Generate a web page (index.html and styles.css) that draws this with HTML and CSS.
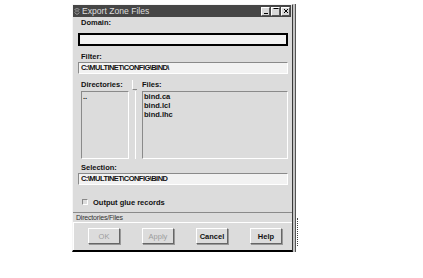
FILE: index.html
```html
<!DOCTYPE html>
<html lang="en">
<head>
    <meta charset="UTF-8">
    <meta name="viewport" content="width=device-width, initial-scale=1.0">
    <title>Export Zone Files</title>
    <link rel="stylesheet" href="styles.css">
</head>
<body>
    <div class="screen">
        <div class="window">
            <div class="titlebar">
                <svg class="ticon" width="6" height="7" viewBox="0 0 6 7">
                    <path d="M0.5 1.5 L3 0.5 L5.5 1.5 M1 3 L5 3 M0.5 4.5 L3 6.5 L5.5 4.5" stroke="#9a9a9a" stroke-width="1" fill="none"/>
                </svg>
                <span class="ttext">Export Zone Files</span>
                <div class="tbtns">
                    <span class="tbtn">
                        <svg width="6" height="6" viewBox="0 0 6 6"><path d="M1 5.5 H5" stroke="#000"/></svg>
                    </span>
                    <span class="tbtn">
                        <svg width="6" height="6" viewBox="0 0 6 6"><path d="M0.5 0.5 H5.5" stroke="#000"/></svg>
                    </span>
                    <span class="tbtn">
                        <svg width="6" height="6" viewBox="0 0 6 6"><path d="M1 1 L5 5 M5 1 L1 5" stroke="#000"/></svg>
                    </span>
                </div>
            </div>
            <div class="content">
                <div class="lbl first">Domain:</div>
                <div class="field focus"></div>
                <div class="lbl gap">Filter:</div>
                <div class="field path">C:\MULTINET\CONFIG\BIND\</div>
                <div class="lists">
                    <div class="col dirs">
                        <div class="lbl">Directories:</div>
                        <div class="list">..</div>
                    </div>
                    <div class="sash"><span class="knob"></span></div>
                    <div class="col files">
                        <div class="lbl">Files:</div>
                        <div class="list">
                            <div>bind.ca</div>
                            <div>bind.lcl</div>
                            <div>bind.lhc</div>
                        </div>
                    </div>
                </div>
                <div class="lbl sel">Selection:</div>
                <div class="field path">C:\MULTINET\CONFIG\BIND</div>
                <div class="check"><span class="box"></span>Output glue records</div>
            </div>
            <div class="status">Directories/Files</div>
            <div class="buttons">
                <button class="off">OK</button>
                <button class="off">Apply</button>
                <button>Cancel</button>
                <button>Help</button>
            </div>
        </div>
        <div class="grip"></div>
    </div>
</body>
</html>
```

FILE: styles.css
```css
body {
    margin: 0;
    background: #fff;
    font-family: 'Liberation Sans', Arial, sans-serif;
    color: #111;
}
.screen {
    display: flex;
    align-items: flex-start;
    padding: 4px 0 0 72px;
}
.window {
    width: 219px;
    background: #dcdcdc;
    border-top: 1px solid #f6f6f6;
    border-left: 1px solid #f6f6f6;
    border-right: 1px solid #3a3a3a;
    border-bottom: 2px solid #000;
    box-shadow: 2px 0 0 #c4c4c4, 3px 0 0 #555;
}
.titlebar {
    height: 12px;
    background: #464646;
    display: flex;
    align-items: center;
    padding-left: 1px;
    margin-right: 1px;
}
.ticon {
    margin-right: 2px;
}
.ttext {
    font-size: 8.6px;
    color: #dedede;
    line-height: 12px;
    flex: 1;
}
.tbtns {
    display: flex;
    gap: 1px;
    padding-right: 1px;
}
.tbtn {
    width: 7px;
    height: 7px;
    background: #d8d8d8;
    border: 1px solid;
    border-color: #fff #555 #555 #fff;
    display: flex;
    align-items: center;
    justify-content: center;
}
.content {
    padding: 1px 4px 0 5px;
}
.lbl {
    font-size: 7.5px;
    font-weight: bold;
    height: 10px;
    line-height: 10px;
    padding-left: 3px;
}
.field {
    height: 10px;
    background: #f2f2f2;
    border: 1px solid;
    border-color: #8a8a8a #fff #fff #8a8a8a;
    font-size: 7.5px;
    font-weight: bold;
    line-height: 10px;
    padding-left: 2px;
    white-space: nowrap;
}
.field.focus {
    height: 9px;
    border: 2px solid #000;
    margin-top: 5px;
}
.path {
    letter-spacing: -0.55px;
}
.lbl.gap {
    margin-top: 6px;
}
.lists {
    display: flex;
    margin-top: 6px;
}
.col .lbl {
    padding-left: 0;
}
.dirs {
    margin-left: 3px;
    width: 48px;
}
.files {
    flex: 1;
}
.list {
    height: 66px;
    margin-top: 1px;
    border: 1px solid;
    border-color: #8a8a8a #fff #fff #8a8a8a;
    font-size: 7.5px;
    font-weight: bold;
    line-height: 9px;
    padding-left: 1px;
}
.sash {
    width: 13px;
    position: relative;
}
.sash::after {
    content: "";
    position: absolute;
    left: 6px;
    top: 11px;
    height: 68px;
    border-left: 1px solid #fff;
}
.knob {
    position: absolute;
    left: 3px;
    top: 0;
    width: 5px;
    height: 10px;
    border-left: 1px solid #fff;
    border-bottom: 1px solid #888;
    box-sizing: border-box;
}
.lbl.sel {
    margin-top: 4px;
}
.check {
    display: flex;
    align-items: center;
    height: 10px;
    margin-top: 12px;
    padding-left: 4px;
    font-size: 7.5px;
    font-weight: bold;
}
.box {
    width: 4px;
    height: 4px;
    border: 1px solid;
    border-color: #888 #fff #fff #888;
    margin-right: 5px;
}
.status {
    margin-top: 5px;
    height: 9px;
    border-top: 1px solid #8a8a8a;
    border-bottom: 1px solid #fff;
    font-size: 7px;
    line-height: 9px;
    padding-left: 3px;
    color: #333;
    letter-spacing: -0.2px;
}
.buttons {
    display: flex;
    gap: 22px;
    padding: 5px 0 6px 14px;
    border-left: 1px solid #fff;
}
button {
    width: 32px;
    height: 16px;
    padding: 0;
    background: #dcdcdc;
    border: 1px solid;
    border-color: #fff #666 #666 #fff;
    box-shadow: 1px 1px 0 #999;
    font-family: 'Liberation Sans', Arial, sans-serif;
    font-size: 7.5px;
    font-weight: bold;
    color: #111;
}
button.off {
    color: #9c9c9c;
    font-weight: normal;
}
.grip {
    margin: 214px 0 0 4px;
    width: 2px;
    height: 28px;
    border-left: 1px dotted #444;
}
```
